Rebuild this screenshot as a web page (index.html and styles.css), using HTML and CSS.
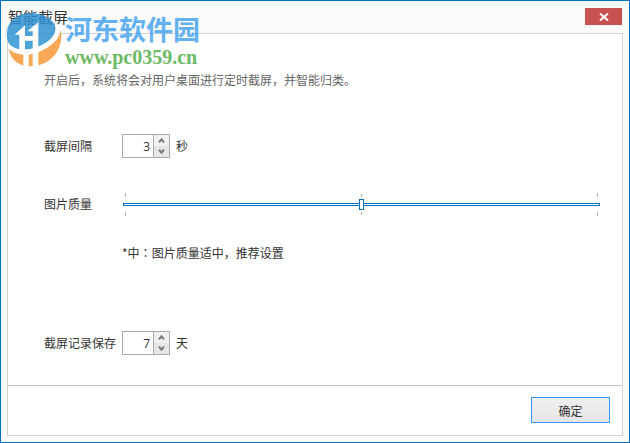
FILE: index.html
```html
<!DOCTYPE html>
<html lang="zh-CN">
<head>
    <meta charset="UTF-8">
    <meta name="viewport" content="width=device-width, initial-scale=1.0">
    <title>智能截屏</title>
    <link rel="stylesheet" href="styles.css">
</head>
<body>
    <div class="window">
        <header class="title-bar">
            <h1>智能截屏</h1>
            <button type="button" class="close-btn" aria-label="关闭">
                <svg width="10" height="8" viewBox="0 0 10 8"><path d="M1 0.5L9 7.5M9 0.5L1 7.5" stroke="#fff" stroke-width="2"/></svg>
            </button>
        </header>

        <form class="panel">
            <div class="settings">
                <p class="desc">开启后，系统将会对用户桌面进行定时截屏，并智能归类。</p>

                <div class="row interval-row">
                    <label for="interval">截屏间隔</label>
                    <div class="spinner">
                        <input type="number" id="interval" value="3" min="1">
                        <div class="spinner-btns">
                            <button type="button" aria-label="增加" onclick="step('interval', 1)"><svg width="7" height="5" viewBox="0 0 7 5"><path d="M1 4.3L3.5 1.3L6 4.3" /></svg></button>
                            <button type="button" aria-label="减少" onclick="step('interval', -1)"><svg width="7" height="5" viewBox="0 0 7 5"><path d="M1 0.7L3.5 3.7L6 0.7" /></svg></button>
                        </div>
                    </div>
                    <span>秒</span>
                </div>

                <div class="row quality-row">
                    <label for="quality">图片质量</label>
                    <div class="slider">
                        <div class="ticks"><i></i><i class="mid"></i><i></i></div>
                        <input type="range" id="quality" min="0" max="2" value="1">
                        <div class="ticks ticks-bottom"><i></i><i class="mid"></i><i></i></div>
                    </div>
                </div>

                <p class="hint">*中<span class="colon" lang="ja">：</span>图片质量适中，推荐设置</p>

                <div class="row">
                    <label for="keep">截屏记录保存</label>
                    <div class="spinner">
                        <input type="number" id="keep" value="7" min="1">
                        <div class="spinner-btns">
                            <button type="button" aria-label="增加" onclick="step('keep', 1)"><svg width="7" height="5" viewBox="0 0 7 5"><path d="M1 4.3L3.5 1.3L6 4.3" /></svg></button>
                            <button type="button" aria-label="减少" onclick="step('keep', -1)"><svg width="7" height="5" viewBox="0 0 7 5"><path d="M1 0.7L3.5 3.7L6 0.7" /></svg></button>
                        </div>
                    </div>
                    <span>天</span>
                </div>
            </div>

            <footer class="actions">
                <button type="button" class="ok-btn">确定</button>
            </footer>
        </form>
    </div>

    <!-- 水印 -->
    <div class="watermark">
        <svg width="58" height="58" viewBox="15 36 174 174">
            <path d="M17 132C12 100 22 68 50 50C85 28 150 38 168 82C172 104 150 132 108 146C72 157 34 148 24 126C18 108 20 92 27 78C17 94 14 112 17 132Z" fill="#3093d3"/>
            <path d="M26 146C62 178 116 162 150 134C168 120 180 104 182 90C190 130 172 168 140 186C108 204 64 204 42 180C34 172 29 160 26 146Z" fill="#f89a3b"/>
            <path d="M24 126C34 148 72 155 108 142C148 128 170 104 166 80L158 56C174 68 184 86 178 104C168 132 124 160 80 164C50 164 30 150 24 126Z" fill="#fff"/>
            <path d="M44 104L75 76V150H58V104ZM75 122V108H98V94H82L115 66V150H98V122ZM70 156H86V204H70ZM98 150H115V204H98Z" fill="#fff"/>
        </svg>
        <div class="watermark-text">
            <div class="site-name">河东软件园</div>
            <div class="site-url">www.pc0359.cn</div>
        </div>
    </div>

    <script>
        function step(id, n) {
            const input = document.getElementById(id);
            if (n > 0) {
                input.stepUp();
            } else {
                input.stepDown();
            }
        }
    </script>
</body>
</html>
```

FILE: styles.css
```css
* {
    box-sizing: border-box;
}

body {
    margin: 0;
    font-family: 'Noto Sans CJK SC', sans-serif;
    font-size: 12px;
    line-height: 24px;
    color: #333;
}

h1,
p {
    margin: 0;
}

button,
input {
    font-family: inherit;
    margin: 0;
    padding: 0;
}

.window {
    display: flex;
    flex-direction: column;
    min-height: 100vh;
    padding: 0 6px 6px;
    background-color: #fbfbfb;
    border: 1px solid #0072c6;
}

.title-bar {
    display: flex;
    justify-content: space-between;
    align-items: flex-start;
    height: 32px;
    padding: 0 1px;
}

.title-bar h1 {
    padding-top: 4px;
    font-size: 15px;
    font-weight: normal;
}

.close-btn {
    display: flex;
    justify-content: center;
    align-items: center;
    width: 37px;
    height: 17px;
    margin-top: 7px;
    background-color: #c75050;
    border: none;
}

.panel {
    display: flex;
    flex-direction: column;
    flex: 1;
    background-color: #fff;
    border: 1px solid #d2d2d2;
}

.settings {
    flex: 1;
    padding: 34px 22px 29px 36px;
}

.desc {
    margin-bottom: 42px;
    color: #666;
}

.row {
    display: flex;
    align-items: center;
}

.row label {
    width: 78px;
    flex-shrink: 0;
}

.interval-row {
    margin-bottom: 34px;
}

.spinner {
    display: flex;
    width: 48px;
    height: 24px;
    margin-right: 6px;
    border: 1px solid #aaa;
}

.spinner input {
    width: 30px;
    padding-right: 3px;
    border: none;
    outline: none;
    font-family: 'Open Sans', sans-serif;
    font-size: 12px;
    color: #333;
    text-align: right;
    appearance: textfield;
    -moz-appearance: textfield;
}

.spinner input::-webkit-inner-spin-button {
    display: none;
}

.spinner-btns {
    display: flex;
    flex-direction: column;
    flex: 1;
    border-left: 1px solid #aaa;
}

.spinner-btns button {
    display: flex;
    flex: 1;
    justify-content: center;
    align-items: center;
    background-color: #f0f0f0;
    border: none;
}

.spinner-btns button + button {
    background-color: #e6e6e6;
}

.spinner-btns path {
    fill: none;
    stroke: #777;
    stroke-width: 2;
}

.quality-row {
    margin-bottom: 25px;
}

.slider {
    flex: 1;
    margin-left: 1px;
}

.ticks {
    display: flex;
    justify-content: space-between;
    align-items: flex-end;
    height: 4px;
    padding: 0 2px;
}

.ticks i {
    width: 1px;
    height: 4px;
    background-color: #b4b4b4;
}

.ticks .mid {
    height: 3px;
}

.ticks-bottom {
    align-items: flex-start;
}

.slider input {
    display: block;
    width: 100%;
    height: 15px;
    background: transparent;
    appearance: none;
    -webkit-appearance: none;
}

.slider input::-webkit-slider-runnable-track {
    height: 3px;
    background-color: #fff;
    border: 1px solid #0072c6;
}

.slider input::-webkit-slider-thumb {
    -webkit-appearance: none;
    width: 5px;
    height: 11px;
    margin-top: -5px;
    background-color: #fff;
    border: 1px solid #0072c6;
}

.hint {
    margin-bottom: 66px;
    padding-left: 78px;
}

.colon {
    font-family: 'Noto Sans CJK JP', sans-serif;
}

.actions {
    display: flex;
    justify-content: flex-end;
    padding: 11px 12px 12px;
    border-top: 1px solid #c3c1cb;
}

.ok-btn {
    width: 79px;
    height: 26px;
    background: linear-gradient(#f0f0f0, #e5e5e5);
    border: 1px solid #3399ff;
    font-size: 12px;
    color: #333;
}

.watermark {
    position: absolute;
    top: 12px;
    left: 5px;
    display: flex;
    opacity: 0.85;
    pointer-events: none;
}

.watermark-text {
    padding-left: 2px;
}

.site-name {
    font-size: 27px;
    font-weight: bold;
    line-height: 34px;
    color: #4aa5f0;
}

.site-url {
    font-family: 'Liberation Serif', serif;
    font-size: 20px;
    font-weight: bold;
    line-height: 22px;
    color: #54ae4b;
}
```
